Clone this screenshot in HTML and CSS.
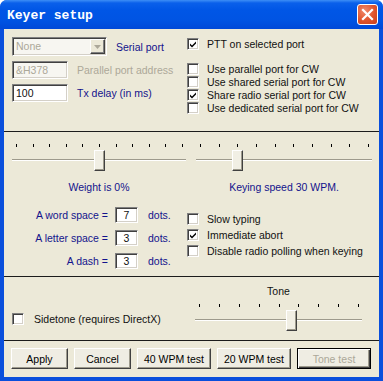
FILE: index.html
```html
<!DOCTYPE html>
<html lang="en">
<head>
  <meta charset="UTF-8" />
  <title>Keyer setup</title>
  <link rel="stylesheet" href="styles.css">
</head>
<body>
  <div class="window">
    <div class="titlebar">
      <span class="title">Keyer setup</span>
      <span class="close">
        <svg width="13" height="13" viewBox="0 0 13 13"><path d="M2 2 L11 11 M11 2 L2 11" stroke="#fff" stroke-width="2.2" stroke-linecap="square"/></svg>
      </span>
    </div>

    <div class="client">
      <!-- port settings -->
      <section class="sec ports">
        <div class="col-left">
          <div class="row">
            <div class="combo disabled">None<span class="combo-btn"><svg width="7" height="4" viewBox="0 0 7 4"><path d="M0 0 H7 L3.5 4 Z" fill="#aca899"/></svg></span></div>
            <span class="lbl blue">Serial port</span>
          </div>
          <div class="row">
            <div class="textbox disabled">&amp;H378</div>
            <span class="lbl gray">Parallel port address</span>
          </div>
          <div class="row">
            <div class="textbox">100</div>
            <span class="lbl blue">Tx delay (in ms)</span>
          </div>
        </div>
        <div class="col-right">
          <label class="check ptt"><span class="box checked"></span>PTT on selected port</label>
          <label class="check"><span class="box"></span>Use parallel port for CW</label>
          <label class="check"><span class="box"></span>Use shared serial port for CW</label>
          <label class="check"><span class="box checked"></span>Share radio serial port for CW</label>
          <label class="check"><span class="box"></span>Use dedicated serial port for CW</label>
        </div>
      </section>

      <!-- keying -->
      <section class="sec keying">
        <div class="sliders">
          <div class="slider-col">
            <div class="slider">
              <div class="ticks"><i></i><i></i><i></i><i></i><i></i><i></i><i></i><i></i><i></i><i></i><i></i></div>
              <div class="track"></div>
              <div class="thumb" style="--pos: 0.5"></div>
            </div>
            <div class="caption blue">Weight is 0%</div>
          </div>
          <div class="slider-col">
            <div class="slider">
              <div class="ticks"><i></i><i></i><i></i><i></i><i></i><i></i><i></i><i></i><i></i><i></i></div>
              <div class="track"></div>
              <div class="thumb" style="--pos: 0.2222"></div>
            </div>
            <div class="caption blue">Keying speed 30 WPM.</div>
          </div>
        </div>
        <div class="timing">
          <div class="spaces">
            <span class="sp-lbl blue">A word space =</span><div class="numbox">7</div><span class="blue">dots.</span>
            <span class="sp-lbl blue">A letter space =</span><div class="numbox">3</div><span class="blue">dots.</span>
            <span class="sp-lbl blue">A dash =</span><div class="numbox">3</div><span class="blue">dots.</span>
          </div>
          <div class="options">
            <label class="check"><span class="box"></span>Slow typing</label>
            <label class="check"><span class="box checked"></span>Immediate abort</label>
            <label class="check"><span class="box"></span>Disable radio polling when keying</label>
          </div>
        </div>
      </section>

      <!-- sidetone -->
      <section class="sec tone">
        <div class="sidetone">
          <label class="check"><span class="box"></span>Sidetone (requires DirectX)</label>
        </div>
        <div class="slider-col">
          <div class="caption tone-lbl">Tone</div>
          <div class="slider">
            <div class="ticks"><i></i><i></i><i></i><i></i><i></i><i></i><i></i><i></i><i></i></div>
            <div class="track"></div>
            <div class="thumb" style="--pos: 0.58"></div>
          </div>
        </div>
      </section>

      <!-- buttons -->
      <div class="buttons">
        <button class="btn small">Apply</button>
        <button class="btn small">Cancel</button>
        <button class="btn">40 WPM test</button>
        <button class="btn">20 WPM test</button>
        <button class="btn default" disabled>Tone test</button>
      </div>
    </div>
  </div>
</body>
</html>
```

FILE: styles.css
```css
body {
  margin: 0;
  background: #fff;
}

.window {
  width: 383px;
  height: 381px;
  background: #0a4fdc;
  border-radius: 7px 7px 0 0;
  display: flex;
  flex-direction: column;
  overflow: hidden;
}

.titlebar {
  height: 29px;
  flex: none;
  display: flex;
  align-items: center;
  justify-content: space-between;
  padding: 0 5px 0 7px;
  background: linear-gradient(to bottom, #3d8ef6 0, #0a60ea 3px, #0056e6 10px, #0054e3 20px, #0049d8 29px);
}

.title {
  font-family: "Liberation Mono", monospace;
  font-weight: bold;
  font-size: 13px;
  color: #fff;
  padding-top: 1px;
}

.close {
  width: 19px;
  height: 19px;
  border: 1px solid #fff;
  border-radius: 3px;
  background: radial-gradient(circle at 35% 30%, #f08a6c 0, #e0532b 55%, #c8401d 100%);
  display: flex;
  align-items: center;
  justify-content: center;
}

.client {
  flex: 1;
  margin: 0 4px 4px;
  background: #ece9d8;
  display: flex;
  flex-direction: column;
  font-family: "Liberation Sans", Arial, sans-serif;
  font-size: 10.5px;
  color: #111;
}

.sec {
  box-sizing: border-box;
  border-bottom: 1px solid #1c1c1c;
}

.blue { color: #13138c; }
.gray { color: #aca899; }

/* port settings */
.ports {
  height: 103px;
  padding: 8px 0 0 8px;
  display: grid;
  grid-template-columns: 175px 1fr;
}

.col-left {
  display: flex;
  flex-direction: column;
  gap: 5px;
}

.row {
  display: flex;
  align-items: center;
}

.lbl {
  margin-left: 9px;
}

.combo, .textbox {
  box-sizing: border-box;
  height: 18px;
  background: #fff;
  border: 1px solid;
  border-color: #808080 #fff #fff #808080;
  box-shadow: inset 1px 1px #404040, inset -1px -1px #d4d0c8;
  padding: 2px 0 0 3px;
  line-height: 13px;
}

.combo {
  width: 95px;
  height: 19px;
  display: flex;
  justify-content: space-between;
}

.textbox {
  width: 56px;
}

.disabled {
  background: #f7f6f1;
  color: #aca899;
}

.combo-btn {
  box-sizing: border-box;
  width: 15px;
  height: 15px;
  margin: -1px 1px 0 0;
  background: #ece9d8;
  border: 1px solid;
  border-color: #fff #404040 #404040 #fff;
  box-shadow: inset -1px -1px #808080;
  display: flex;
  align-items: center;
  justify-content: center;
}

.col-right {
  display: flex;
  flex-direction: column;
}

.check {
  display: flex;
  align-items: center;
  height: 13px;
  white-space: nowrap;
}

.check.ptt {
  height: 14px;
  margin-bottom: 11px;
}

.box {
  box-sizing: border-box;
  width: 12px;
  height: 12px;
  flex: none;
  margin-right: 8px;
  background: #fff;
  border: 1px solid;
  border-color: #808080 #fff #fff #808080;
  box-shadow: inset 1px 1px #404040, inset -1px -1px #d4d0c8;
}

.box.checked {
  background: #fff url("data:image/svg+xml,%3Csvg xmlns='http://www.w3.org/2000/svg' width='10' height='10'%3E%3Cpath d='M2 4.5 L4 6.5 L8 2.5 L8 4.5 L4 8.5 L2 6.5 Z' fill='%23000'/%3E%3C/svg%3E") no-repeat center;
}

/* keying */
.keying {
  height: 145px;
  padding: 12px 0 0 8px;
}

.sliders {
  display: grid;
  grid-template-columns: 174px 176px;
  column-gap: 10px;
}

.slider {
  position: relative;
  height: 28px;
}

.ticks {
  display: flex;
  justify-content: space-between;
  padding: 0 3px 0 4px;
  height: 4px;
}

.ticks i {
  width: 1px;
  height: 3px;
  background: #000;
}

.track {
  margin-top: 11px;
  height: 0;
  border-top: 1px solid #9d9a8c;
  border-bottom: 1px solid #fff;
}

.thumb {
  position: absolute;
  top: 6px;
  left: calc(4px + (100% - 8px) * var(--pos) - 5px);
  box-sizing: border-box;
  width: 11px;
  height: 21px;
  background: #f1efe4;
  border: 1px solid;
  border-color: #fff #404040 #404040 #fff;
  box-shadow: inset -1px -1px #9d9a8c;
}

.caption {
  text-align: center;
  margin-top: 9px;
  line-height: 13px;
}

.timing {
  display: grid;
  grid-template-columns: 175px 1fr;
  margin-top: 13px;
}

.spaces {
  display: grid;
  grid-template-columns: 96px 23px auto;
  column-gap: 7px;
  row-gap: 7px;
  align-items: center;
  justify-content: start;
}

.spaces span:nth-child(3n) {
  margin-left: 3px;
}

.sp-lbl {
  text-align: right;
}

.numbox {
  box-sizing: border-box;
  height: 16px;
  background: #fff;
  border: 1px solid;
  border-color: #808080 #fff #fff #808080;
  box-shadow: inset 1px 1px #404040, inset -1px -1px #d4d0c8;
  text-align: center;
  line-height: 14px;
}

.options {
  margin-top: 4px;
  display: flex;
  flex-direction: column;
}

.options .check {
  height: 16px;
}

/* sidetone */
.tone {
  height: 64px;
  padding: 8px 0 0 8px;
  display: grid;
  grid-template-columns: 183px 167px;
}

.sidetone {
  padding-top: 27px;
}

.sidetone .box {
  margin-right: 10px;
}

.tone-lbl {
  margin: 0 0 6px;
}

/* buttons */
.buttons {
  display: flex;
  gap: 6px;
  padding: 7px 0 0 7px;
}

.btn {
  box-sizing: border-box;
  width: 74px;
  height: 21px;
  padding: 0;
  font: inherit;
  color: #000;
  background: #efede3;
  border: 1px solid;
  border-color: #fff #404040 #404040 #fff;
  box-shadow: inset -1px -1px #9d9a8c;
}

.btn.small {
  width: 57px;
}

.btn.default {
  border-color: #000;
  box-shadow: inset 1px 1px #fff, inset -1px -1px #404040, inset -2px -2px #9d9a8c;
}

.btn:disabled {
  color: #aca899;
}
```
